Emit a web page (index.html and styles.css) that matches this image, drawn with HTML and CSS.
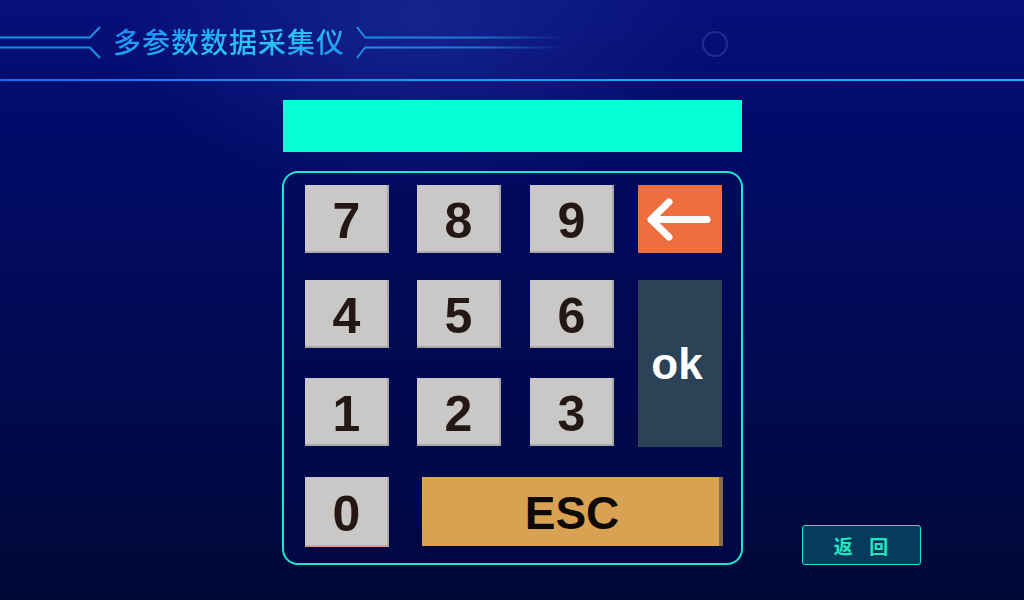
FILE: index.html
```html
<!DOCTYPE html>
<html lang="zh">
<head>
<meta charset="utf-8">
<title>多参数数据采集仪</title>
<link rel="stylesheet" href="styles.css">
</head>
<body>
<header class="header">
  <div class="deco deco-left">
    <svg width="104" height="40" viewBox="0 0 104 40">
      <path d="M0 11.5 H90 L100 1" fill="none" stroke="#1a8fe8" stroke-width="2"/>
      <path d="M0 21.5 H90 L100 32" fill="none" stroke="#1a8fe8" stroke-width="2"/>
    </svg>
  </div>
  <h1 class="title">多参数数据采集仪</h1>
  <div class="deco deco-right">
    <svg width="210" height="40" viewBox="0 0 210 40">
      <defs>
        <linearGradient id="fade" x1="0" x2="1" y1="0" y2="0">
          <stop offset="0" stop-color="#1a8fe8"/>
          <stop offset="0.55" stop-color="#1a8fe8" stop-opacity="0.8"/>
          <stop offset="1" stop-color="#1a8fe8" stop-opacity="0"/>
        </linearGradient>
      </defs>
      <path d="M2 1 L10 11.5" fill="none" stroke="#1a8fe8" stroke-width="2"/>
      <path d="M2 32 L10 21.5" fill="none" stroke="#1a8fe8" stroke-width="2"/>
      <rect x="10" y="10.5" width="200" height="2" fill="url(#fade)"/>
      <rect x="10" y="20.5" width="200" height="2" fill="url(#fade)"/>
    </svg>
  </div>
  <div class="ring"></div>
</header>
<main class="main">
  <div class="side"></div>
  <div class="center">
    <div class="display"></div>
    <div class="pad">
      <button class="key num">7</button>
      <button class="key num">8</button>
      <button class="key num">9</button>
      <button class="key back" aria-label="退格">
        <svg width="84" height="68" viewBox="0 0 84 68">
          <path d="M31 17 L13 34.5 L31 52 M13 34.5 H69" fill="none" stroke="#fff" stroke-width="7" stroke-linecap="round" stroke-linejoin="round"/>
        </svg>
      </button>
      <button class="key num">4</button>
      <button class="key num">5</button>
      <button class="key num">6</button>
      <button class="key ok">ok</button>
      <button class="key num">1</button>
      <button class="key num">2</button>
      <button class="key num">3</button>
      <button class="key num zero">0</button>
      <button class="key esc">ESC</button>
    </div>
  </div>
  <div class="side side-right">
    <button class="return">返&nbsp;回</button>
  </div>
</main>
</body>
</html>
```

FILE: styles.css
```css
html, body {
  margin: 0;
  padding: 0;
}
body {
  width: 1024px;
  height: 600px;
  overflow: hidden;
  font-family: "Liberation Sans", Arial, sans-serif;
  background:
    radial-gradient(ellipse 420px 260px at 420px 20px, rgba(40,60,170,0.45), rgba(40,60,170,0) 70%),
    linear-gradient(180deg, #06107a 0%, #020b6a 20%, #010a58 50%, #000a45 80%, #000836 100%);
}
.header {
  position: relative;
  box-sizing: content-box;
  height: 53px;
  padding-top: 26px;
  border-bottom: 2px solid #14a8f8;
  border-image: linear-gradient(90deg, #0c6ef4 0%, #129cf6 40%, #14b6f8 100%) 1;
  display: flex;
  align-items: flex-start;
}
.deco {
  display: flex;
}
.deco svg {
  display: block;
}
.deco-left {
  width: 104px;
}
.title {
  margin: -2px 0 0 9px;
  font-family: "Noto Sans CJK SC", sans-serif;
  font-size: 28px;
  font-weight: 500;
  letter-spacing: 1px;
  line-height: 34px;
  background: linear-gradient(160deg, #1a80f6 0%, #20acf8 35%, #2ac8f6 60%, #1e90f4 100%);
  -webkit-background-clip: text;
  background-clip: text;
  color: transparent;
}
.deco-right {
  margin-left: 10px;
}
.ring {
  position: absolute;
  left: 702px;
  top: 31px;
  width: 22px;
  height: 22px;
  border: 2px solid rgba(60,80,170,0.5);
  border-radius: 50%;
}
.main {
  display: grid;
  grid-template-columns: 1fr 461px 1fr;
  height: 519px;
}
.center {
  display: flex;
  flex-direction: column;
  align-items: center;
  padding-top: 19px;
}
.display {
  width: 459px;
  height: 52px;
  background: #04fed5;
}
.pad {
  margin-top: 19px;
  width: 461px;
  height: 394px;
  box-sizing: border-box;
  border: 2px solid #1ee6d2;
  border-radius: 16px;
  background: rgba(0, 8, 80, 0.35);
  padding: 12px 0 0 21px;
  display: grid;
  grid-template-columns: 112px 113px 108px 84px;
  grid-template-rows: 95px 98px 99px 70px;
  align-items: start;
  justify-items: start;
}
.key {
  width: 84px;
  height: 68px;
  border: none;
  padding: 0;
  margin: 0;
  font-family: "Liberation Sans", Arial, sans-serif;
  font-weight: bold;
  cursor: pointer;
  display: flex;
  align-items: center;
  justify-content: center;
}
.num {
  background: #c9c8c6;
  color: #231815;
  font-size: 50px;
  box-shadow: inset -2px -2px 0 #a9a8ac;
  padding-top: 4px;
}
.zero {
  height: 70px;
  box-shadow: inset -2px 0 0 #a9a8ac, inset 0 -2px 0 #d7a08e;
}
.back {
  background: #ee6e40;
}
.back svg {
  display: block;
}
.ok {
  grid-row: 2 / span 2;
  grid-column: 4;
  height: 167px;
  background: #2c4357;
  color: #ffffff;
  font-size: 44px;
  padding-right: 5px;
}
.esc {
  grid-column: 2 / span 3;
  width: 301px;
  height: 69px;
  margin-left: 5px;
  background: #d9a252;
  color: #0d0906;
  font-size: 46px;
  box-shadow: inset -4px 0 0 #8c6d4a;
  padding-top: 2px;
}
.side-right {
  display: flex;
  align-items: flex-end;
  padding-left: 59px;
  padding-bottom: 35px;
}
.return {
  width: 119px;
  height: 40px;
  box-sizing: border-box;
  border: 1px solid #1ee6c8;
  border-radius: 3px;
  background: #083a5c;
  color: #1fe6c0;
  font-family: "Noto Sans CJK SC", sans-serif;
  font-size: 19px;
  font-weight: bold;
  letter-spacing: 6px;
  padding: 0 0 0 6px;
  cursor: pointer;
}
```
